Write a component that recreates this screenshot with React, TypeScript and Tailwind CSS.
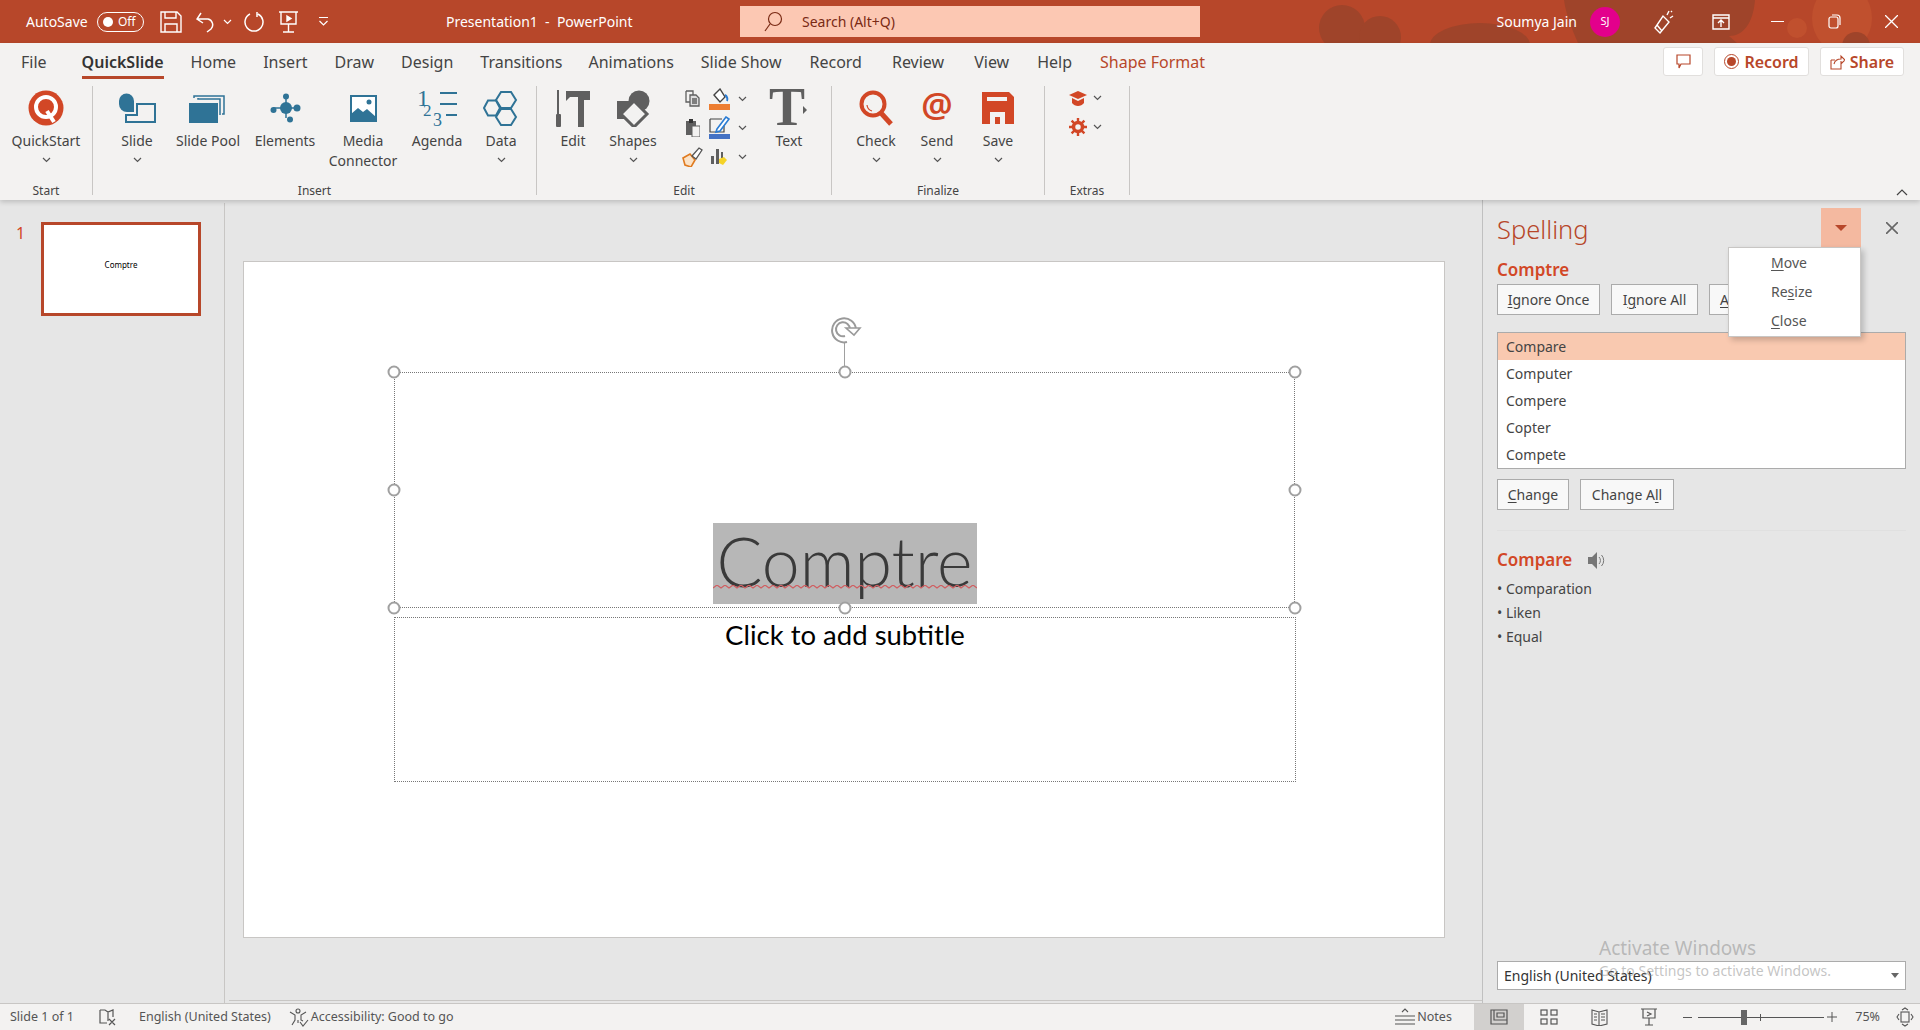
import React from "react";

const tabs = [
  { name: "File", cls: "" },
  { name: "QuickSlide", cls: "ml-[8px]" },
  { name: "Home", cls: "" },
  { name: "Insert", cls: "" },
  { name: "Draw", cls: "" },
  { name: "Design", cls: "" },
  { name: "Transitions", cls: "" },
  { name: "Animations", cls: "-ml-[1px]" },
  { name: "Slide Show", cls: "" },
  { name: "Record", cls: "ml-[1px]" },
  { name: "Review", cls: "ml-[3px]" },
  { name: "View", cls: "ml-[3px]" },
  { name: "Help", cls: "ml-[1px]" },
];

function Chev({ className = "text-[#555]" }: { className?: string }) {
  return (
    <svg width="9" height="6" viewBox="0 0 9 6" className={className}>
      <path d="M1 1l3.5 3.5L8 1" fill="none" stroke="currentColor" strokeWidth="1.2" />
    </svg>
  );
}

function RibbonButton({ label, width, chevron, children }: { label: React.ReactNode; width: string; chevron?: boolean; children: React.ReactNode }) {
  return (
    <div className={`flex flex-col items-center shrink-0 ${width}`}>
      <div className="h-[45px] flex items-center justify-center pb-[1px]">{children}</div>
      <div className="text-[14px] leading-[20px] text-[#444] text-center whitespace-nowrap">{label}</div>
      {chevron && (
        <div className="h-[16px] mt-[1px] flex items-center">
          <Chev />
        </div>
      )}
    </div>
  );
}

function Group({ label, width, pad, children }: { label: string; width: string; pad: string; children: React.ReactNode }) {
  return (
    <>
      <div className={`flex flex-col h-[114px] shrink-0 ${width}`}>
        <div className={`flex h-[92px] ${pad}`}>{children}</div>
        <div className="mt-auto text-center text-[12px] leading-[18px] text-[#444]">{label}</div>
      </div>
      <div className="w-px h-[109px] bg-[#c8c6c4] shrink-0" />
    </>
  );
}

const teal = "#2f7396";
const grey = "#5f5f5f";
const red = "#d24726";

function QuickIcon() {
  return (
    <svg width="36" height="36" viewBox="0 0 36 36">
      <circle cx="18" cy="18" r="17.5" fill={red} />
      <circle cx="18" cy="17" r="10" fill="none" stroke="#fff" strokeWidth="4" />
      <path d="M19 21l7 11" stroke="#fff" strokeWidth="4" />
    </svg>
  );
}

function SlideIcon() {
  return (
    <svg width="37" height="30" viewBox="0 0 37 30">
      <path d="M0 8a7.5 7.5 0 0 1 15 0v11H8a8 8 0 0 1-8-8z" fill={teal} />
      <path d="M18 11h18v18H7v-7h11z" fill="none" stroke={teal} strokeWidth="2" />
    </svg>
  );
}

function PoolIcon() {
  return (
    <svg width="38" height="29" viewBox="0 0 38 29">
      <path d="M5 4V2h30v18h-2M9 4V5h22v16" fill="none" stroke={teal} strokeWidth="1.5" />
      <rect x="0" y="9" width="29" height="20" fill={teal} />
    </svg>
  );
}

function ElementsIcon() {
  return (
    <svg width="31" height="30" viewBox="0 0 31 30" fill={teal}>
      <path d="M16 3v22M3 15h26" stroke={teal} strokeWidth="1.5" />
      <circle cx="16" cy="15" r="6" />
      <circle cx="16" cy="3.5" r="3" />
      <circle cx="3.5" cy="17" r="3" />
      <circle cx="27" cy="15" r="3.5" />
      <circle cx="20" cy="26.5" r="3" />
    </svg>
  );
}

function MediaIcon() {
  return (
    <svg width="27" height="27" viewBox="0 0 27 27">
      <rect x="1" y="1" width="25" height="25" fill="#fff" stroke={teal} strokeWidth="2" />
      <path d="M1 26V19l7-6 5 4 4-3 9 8v4z" fill={teal} />
      <circle cx="19" cy="7" r="2.5" fill={teal} />
    </svg>
  );
}

function AgendaIcon() {
  return (
    <svg width="40" height="38" viewBox="0 0 40 38" fill={teal} className="overflow-visible">
      <text x="0" y="17" fontFamily="Liberation Serif, serif" fontSize="24">1</text>
      <text x="6" y="27" fontFamily="Liberation Serif, serif" fontSize="17">2</text>
      <text x="16" y="37" fontFamily="Liberation Serif, serif" fontSize="18">3</text>
      <path d="M23 4h17M23 15h17M29 26h11" stroke={teal} strokeWidth="1.8" />
    </svg>
  );
}

function DataIcon() {
  return (
    <svg width="36" height="37" viewBox="0 0 36 37" fill="none" stroke={teal} strokeWidth="2">
      <path d="M18 2h10l5 8-5 8H18l-5-8z" />
      <path d="M5 10.5h8l4 7.5-4 7.5H5L1 18z" />
      <path d="M18 19h10l5 8-5 8H18l-5-8z" />
    </svg>
  );
}

function EditIcon() {
  return (
    <svg width="34" height="37" viewBox="0 0 34 37" fill={grey}>
      <rect x="1" y="0" width="2" height="24" />
      <rect x="0" y="24" width="5" height="13" rx="1" />
      <path d="M10 1h24v9h-6v27h-6V7H14l-4 4z" />
    </svg>
  );
}

function ShapesIcon() {
  return (
    <svg width="33" height="37" viewBox="0 0 33 37">
      <circle cx="22" cy="11" r="10.5" fill={grey} />
      <rect x="0" y="11" width="14" height="18" fill={grey} />
      <path d="M17 11l13 13-13 13L4 24z" fill="#f3f2f1" stroke={grey} strokeWidth="3" />
    </svg>
  );
}

function SmallTools() {
  return (
    <div className="grid grid-cols-[27px_26px_20px] auto-rows-[29px] items-center justify-items-center w-[80px] ml-[16px] -mt-[2px] h-[90px]">
      <svg width="15" height="17" viewBox="0 0 15 17" fill="none" stroke={grey} strokeWidth="1.3">
        <path d="M1 1h7v4M1 1v11h4" />
        <path d="M5 5h6l3 3v8H5z" fill="#ddd" />
        <path d="M7 9h5M7 11h5M7 13h5" />
      </svg>
      <svg width="21" height="22" viewBox="0 0 21 22">
        <path d="M5 7l6-6 5 8-5 5z" fill="#fff" stroke="#444" strokeWidth="1.4" />
        <path d="M16 7c2 1 3 4 2 6" stroke="#2b7cd3" strokeWidth="2" fill="none" />
        <rect x="0" y="16" width="21" height="6" fill="#ed7d31" />
      </svg>
      <Chev />
      <svg width="14" height="18" viewBox="0 0 14 18">
        <rect x="0" y="2" width="10" height="14" fill={grey} />
        <rect x="3" y="0" width="4" height="4" fill="#333" />
        <rect x="6" y="7" width="8" height="11" fill="#f3f2f1" stroke={grey} />
      </svg>
      <svg width="21" height="23" viewBox="0 0 21 23">
        <path d="M1 3h12M1 3v13h14v-6" fill="none" stroke="#444" strokeWidth="1.2" />
        <path d="M8 13l9-12 3 2-9 12-4 1z" fill="#fff" stroke="#2b7cd3" strokeWidth="1.6" />
        <rect x="0" y="18" width="21" height="5" fill="#4472c4" />
      </svg>
      <Chev />
      <svg width="21" height="20" viewBox="0 0 21 20">
        <path d="M1 11l7-4 5 6-4 7-6-2z" fill="#fbe3c8" stroke="#e07b1f" strokeWidth="1.6" />
        <path d="M10 9l7-8 3 2-6 9z" fill="#fff" stroke="#555" strokeWidth="1.3" />
      </svg>
      <svg width="16" height="17" viewBox="0 0 16 17">
        <rect x="0" y="8" width="3" height="8" fill={grey} />
        <rect x="5" y="1" width="3" height="15" fill={grey} />
        <rect x="10" y="4" width="2" height="6" fill={grey} />
        <path d="M8 11l5-2 3 3-4 5-4-2z" fill="#f5d327" />
      </svg>
      <Chev />
    </div>
  );
}

function TextIcon() {
  return (
    <svg width="38" height="40" viewBox="0 0 38 40" className="overflow-visible">
      <text x="-1" y="37" fontFamily="Liberation Serif, serif" fontWeight="700" fontSize="54" fill={grey}>T</text>
      <path d="M33 18l4 4-4 4z" fill={grey} />
    </svg>
  );
}

function CheckIcon() {
  return (
    <svg width="35" height="36" viewBox="0 0 35 36" fill="none" stroke={red}>
      <circle cx="14" cy="14" r="11.5" strokeWidth="4" />
      <path d="M22 23l10 11" strokeWidth="5" />
      <path d="M8 15a7 7 0 0 0 5 6" strokeWidth="1.2" />
    </svg>
  );
}

function SendIcon() {
  return (
    <svg width="34" height="38" viewBox="0 0 34 38" className="overflow-visible">
      <text x="17" y="29" textAnchor="middle" fontFamily="Noto Sans, sans-serif" fontSize="35" fontWeight="600" fill={red}>@</text>
    </svg>
  );
}

function SaveIcon() {
  return (
    <svg width="32" height="32" viewBox="0 0 32 32" fill={red}>
      <path d="M0 0h27l5 5v27H0z" />
      <rect x="5" y="5" width="20" height="4" fill="#f3f2f1" />
      <path d="M8 32V20h15v12h-5v-7h-5v7z" fill="#f3f2f1" />
    </svg>
  );
}

function TitleBlobs() {
  return (
    <svg width="640" height="43" viewBox="0 0 640 43" className="absolute right-0 top-0">
      <g fill="#c0502e">
        <circle cx="517" cy="28" r="10" />
        <ellipse cx="562" cy="18" rx="30" ry="34" />
      </g>
      <g fill="#9f442a">
        <circle cx="62" cy="28" r="23" />
        <circle cx="100" cy="37" r="21" />
        <ellipse cx="200" cy="45" rx="50" ry="22" />
        <path d="M284 0h191c-2 24-12 36-26 36l8 7H298c-6-14-12-28-14-43z" />
        <ellipse cx="576" cy="46" rx="14" ry="14" />
      </g>
    </svg>
  );
}

function Handle({ x, y }: { x: number; y: number }) {
  return <div className="absolute w-[13px] h-[13px] rounded-full bg-white border-2 border-[#a0a0a0] -translate-x-1/2 -translate-y-1/2" style={{ left: x, top: y }} />;
}

const squiggle = Array.from({ length: 67 }, (_, i) => `${i * 4},${i % 2 ? 0 : 3}`).join(" ");

function Slide() {
  const xs = [0, 451, 901];
  return (
    <div className="relative w-[1202px] h-[677px] bg-white border border-[#c8c6c4] shrink-0">
      <div className="absolute left-[150px] top-[110px] w-[901px] h-[236px] border border-dotted border-[#777] flex items-end justify-center pb-[3px]">
        <span className="relative w-[264px] h-[81px] bg-[#b7b7b7] text-[#3a3a3a] text-center font-['Lato',sans-serif] font-light text-[68px] leading-[76px]">
          Comptre
          <svg width="264" height="4" className="absolute left-0 top-[62px]">
            <polyline points={squiggle} fill="none" stroke="#cf5f62" strokeWidth="1.2" />
          </svg>
        </span>
      </div>
      <div className="absolute left-[150px] top-[355px] w-[902px] h-[165px] border border-dotted border-[#777] flex justify-center">
        <span className="font-['Lato',sans-serif] text-[27.5px] leading-[34px] text-black">Click to add subtitle</span>
      </div>
      <div className="absolute left-[600px] top-[80px] w-px h-[30px] bg-[#a0a0a0]" />
      <svg width="34" height="28" viewBox="0 0 34 28" className="absolute left-[584px] top-[55px]" fill="none" stroke="#9a9a9a">
        <path d="M28 12a12 12 0 1 0-9 13" strokeWidth="2" />
        <path d="M22 12a7 7 0 1 0-5 7" strokeWidth="2" />
        <path d="M18 11h14l-6 7z" fill="#fff" strokeWidth="1.6" />
      </svg>
      {xs.map((x) => (
        <React.Fragment key={x}>
          <Handle x={150 + x} y={110} />
          {x !== 451 && <Handle x={150 + x} y={228} />}
          <Handle x={150 + x} y={346} />
        </React.Fragment>
      ))}
    </div>
  );
}

function PaneButton({ children, width }: { children: React.ReactNode; width: string }) {
  return <div className={`h-[31px] ${width} shrink-0 bg-white/70 border border-[#ababab] flex items-center justify-center text-[14px] text-[#444]`}>{children}</div>;
}

function U({ children }: { children: React.ReactNode }) {
  return <span className="underline underline-offset-2 decoration-1">{children}</span>;
}

export default function App() {
  return (
    <div className="relative w-[1920px] h-[1030px] overflow-hidden flex flex-col bg-[#e6e6e6] font-['Noto_Sans',sans-serif]">
      {/* title bar */}
      <div className="relative h-[43px] shrink-0 bg-[#b7472a] flex items-center text-white text-[14px]">
        <TitleBlobs />
        <span className="relative ml-[26px] w-[71px]">AutoSave</span>
        <div className="relative w-[47px] h-[20px] rounded-full border border-white flex items-center pl-[5px] gap-[5px] text-[12px]">
          <span className="w-[10px] h-[10px] rounded-full bg-white" />
          Off
        </div>
        <svg width="22" height="22" viewBox="0 0 22 22" className="relative ml-[16px]" fill="none" stroke="#fff" strokeWidth="1.4">
          <path d="M1 1h16l4 4v16H1zM5 1v6h11V1M5 21v-8h12v8" />
        </svg>
        <svg width="20" height="22" viewBox="0 0 20 22" className="relative ml-[14px]" fill="none" stroke="#fff" strokeWidth="1.5">
          <path d="M1 8h11a6 6 0 0 1 3 10l-4 3M5 2L1 8l6 4" />
        </svg>
        <Chev className="relative ml-[7px] text-white" />
        <svg width="21" height="22" viewBox="0 0 21 22" className="relative ml-[12px]" fill="none" stroke="#fff" strokeWidth="1.5">
          <path d="M6 3a9 9 0 1 0 8 0M13 1v5" />
        </svg>
        <svg width="19" height="22" viewBox="0 0 19 22" className="relative ml-[14px]" fill="none" stroke="#fff" strokeWidth="1.4">
          <path d="M0 1h19M2 1v12h15V1M9.5 13v8M4 21h11" />
          <path d="M8 5l4 2.5L8 10z" fill="#fff" />
        </svg>
        <svg width="11" height="11" viewBox="0 0 11 11" className="relative ml-[20px]" fill="none" stroke="#fff" strokeWidth="1.2">
          <path d="M1 1.5h9M1.5 5l4 4 4-4" />
        </svg>
        <span className="relative ml-[117px] w-[294px] whitespace-pre">Presentation1  -  PowerPoint</span>
        <div className="relative w-[460px] h-[31px] bg-[#fcc8b3] flex items-center text-[#7a2a14]">
          <svg width="19" height="21" viewBox="0 0 19 21" className="ml-[24px]" fill="none" stroke="#7a2a14" strokeWidth="1.2">
            <circle cx="11" cy="8" r="6.5" />
            <path d="M6 13l-5 7" />
          </svg>
          <span className="ml-[19px]">Search (Alt+Q)</span>
        </div>
        <span className="relative ml-auto">Soumya Jain</span>
        <div className="relative ml-[13px] w-[30px] h-[30px] rounded-full bg-[#e3008c] flex items-center justify-center text-[11px]">SJ</div>
        <svg width="20" height="24" viewBox="0 0 20 24" className="relative ml-[34px]" fill="none" stroke="#fff" strokeWidth="1.4">
          <path d="M1 18L9 6l6 6-9 11zM3 15l5 6M13 5l2-4M16 8l3-2M17 2l1-1" />
        </svg>
        <svg width="18" height="16" viewBox="0 0 18 16" className="relative ml-[38px]" fill="none" stroke="#fff" strokeWidth="1.4">
          <path d="M1 1h16v14H1zM1 4h16M9 13V7M6 9l3-3 3 3" />
        </svg>
        <span className="relative ml-[41px] w-[13px] h-[1.5px] bg-white" />
        <svg width="13" height="15" viewBox="0 0 13 15" className="relative ml-[44px]" fill="none" stroke="#fff" strokeWidth="1.2">
          <rect x="1" y="3" width="9" height="11" rx="2" />
          <path d="M4 1h5a3 3 0 0 1 3 3v7" />
        </svg>
        <svg width="13" height="13" viewBox="0 0 13 13" className="relative ml-[44px] mr-[22px]" stroke="#fff" strokeWidth="1.3">
          <path d="M0 0l13 13M13 0L0 13" />
        </svg>
      </div>

      {/* tabs */}
      <div className="relative z-10 bg-[#f3f2f1] shadow-[0_2px_5px_rgba(0,0,0,0.18)] shrink-0">
        <div className="h-[37px] flex items-center pl-[21px] gap-[27px] text-[16px] text-[#444]">
          {tabs.map((t) =>
            t.name === "QuickSlide" ? (
              <div key={t.name} className={`relative font-semibold text-[#333] ${t.cls}`}>
                {t.name}
                <div className="absolute -bottom-[5px] left-0 right-0 h-[3px] bg-[#b7472a]" />
              </div>
            ) : (
              <span key={t.name} className={t.cls}>{t.name}</span>
            )
          )}
          <span className="ml-[1px] text-[#b7472a]">Shape Format</span>
          <div className="ml-auto mr-[16px] flex gap-[11px] text-[#b7472a] font-semibold">
            <div className="w-[40px] h-[29px] bg-white border border-[#e1dfdd] rounded-[3px] flex items-center justify-center">
              <svg width="15" height="15" viewBox="0 0 15 15" fill="none" stroke="#b7472a" strokeWidth="1.2">
                <path d="M1 1h13v9H5l-2 4v-4H1z" />
              </svg>
            </div>
            <div className="w-[95px] h-[29px] bg-white border border-[#e1dfdd] rounded-[3px] flex items-center justify-center gap-[5px]">
              <span className="w-[15px] h-[15px] rounded-full border border-[#b7472a] flex items-center justify-center">
                <span className="w-[9px] h-[9px] rounded-full bg-[#b7472a]" />
              </span>
              Record
            </div>
            <div className="w-[84px] h-[29px] bg-white border border-[#e1dfdd] rounded-[3px] flex items-center justify-center gap-[5px]">
              <svg width="15" height="16" viewBox="0 0 15 16" fill="none" stroke="#b7472a" strokeWidth="1.1">
                <path d="M1 6h4M1 6v9h10v-5M4 10c1-4 4-5 7-5V2l4 4-4 4V7" />
              </svg>
              Share
            </div>
          </div>
        </div>

        {/* ribbon */}
        <div className="relative h-[120px] flex pt-[6px]">
          <Group label="Start" width="w-[92px]" pad="pl-0">
            <RibbonButton label="QuickStart" width="w-[92px]" chevron>
              <QuickIcon />
            </RibbonButton>
          </Group>
          <Group label="Insert" width="w-[443px]" pad="pl-[12px]">
            <RibbonButton label="Slide" width="w-[64px]" chevron>
              <SlideIcon />
            </RibbonButton>
            <RibbonButton label="Slide Pool" width="w-[78px]">
              <PoolIcon />
            </RibbonButton>
            <RibbonButton label="Elements" width="w-[76px]">
              <ElementsIcon />
            </RibbonButton>
            <RibbonButton label={<>Media<br />Connector</>} width="w-[80px]">
              <MediaIcon />
            </RibbonButton>
            <RibbonButton label="Agenda" width="w-[68px]">
              <AgendaIcon />
            </RibbonButton>
            <RibbonButton label="Data" width="w-[60px]" chevron>
              <DataIcon />
            </RibbonButton>
          </Group>
          <Group label="Edit" width="w-[294px]" pad="pl-[6px]">
            <RibbonButton label="Edit" width="w-[60px]">
              <EditIcon />
            </RibbonButton>
            <RibbonButton label="Shapes" width="w-[60px]" chevron>
              <ShapesIcon />
            </RibbonButton>
            <SmallTools />
            <RibbonButton label="Text" width="w-[60px]">
              <TextIcon />
            </RibbonButton>
          </Group>
          <Group label="Finalize" width="w-[212px]" pad="pl-[14px] gap-[1px]">
            <RibbonButton label="Check" width="w-[60px]" chevron>
              <CheckIcon />
            </RibbonButton>
            <RibbonButton label="Send" width="w-[60px]" chevron>
              <SendIcon />
            </RibbonButton>
            <RibbonButton label="Save" width="w-[60px]" chevron>
              <SaveIcon />
            </RibbonButton>
          </Group>
          <Group label="Extras" width="w-[84px]" pad="pl-[24px]">
            <div className="grid grid-cols-[18px_20px] auto-rows-[29px] items-center justify-items-center -mt-[3px] h-[80px]">
              <svg width="18" height="16" viewBox="0 0 18 16" fill={red}>
                <path d="M9 1l9 4-9 4-9-4z" />
                <path d="M3 8l6 3 6-3v5c-3 4-9 4-12 0z" />
              </svg>
              <Chev />
              <svg width="18" height="18" viewBox="0 0 18 18" fill="none" stroke={red}>
                <circle cx="9" cy="9" r="4.5" strokeWidth="3.5" />
                <path d="M9 0v4M9 14v4M0 9h4M14 9h4M2.6 2.6l3 3M12.4 12.4l3 3M15.4 2.6l-3 3M5.6 12.4l-3 3" strokeWidth="2.4" />
              </svg>
              <Chev />
            </div>
          </Group>
          <svg width="12" height="7" viewBox="0 0 12 7" className="absolute right-[12px] top-[109px]" fill="none" stroke="#444" strokeWidth="1.2">
            <path d="M1 6l5-5 5 5" />
          </svg>
        </div>
      </div>

      {/* body */}
      <div className="flex-1 min-h-0 flex">
        <div className="w-[225px] shrink-0 mt-[3px] border-r border-[#c8c6c4] pt-[19px] pl-[16px] flex items-start">
          <span className="w-[25px] text-[16px] leading-[22px] text-[#d24726]">1</span>
          <div className="w-[160px] h-[94px] bg-white border-[3px] border-[#b7472a] flex items-center justify-center text-[8px] text-black pb-[8px]">Comptre</div>
        </div>
        <div className="flex-1 min-w-0 flex flex-col pt-[61px] pl-[18px]">
          <Slide />
          <div className="mt-auto mb-[2px] -ml-[14px] h-px bg-[#c8c6c4]" />
        </div>
        <div className="relative w-[438px] shrink-0 border-l border-[#c0c0c0] flex flex-col pl-[14px] pr-[14px] pt-[8px] pb-[13px]">
          <div className="h-[40px] flex items-center">
            <span className="text-[25.5px] leading-[34px] font-light text-[#b7472a] mt-[1px]">Spelling</span>
            <div className="ml-auto w-[40px] h-[40px] bg-[#f4b9a0] flex items-center justify-center">
              <span className="w-0 h-0 border-x-[6px] border-x-transparent border-t-[6px] border-t-[#b7472a]" />
            </div>
            <svg width="12" height="12" viewBox="0 0 12 12" className="ml-[25px] mr-[8px]" stroke="#666" strokeWidth="1.6">
              <path d="M0 0l12 12M12 0L0 12" />
            </svg>
          </div>
          <div className="mt-[10px] h-[24px] text-[17px] leading-[24px] font-semibold text-[#d24726]">Comptre</div>
          <div className="mt-[2px] flex gap-[11px]">
            <PaneButton width="w-[103px]"><span><U>I</U>gnore Once</span></PaneButton>
            <PaneButton width="w-[87px]"><span>I<U>g</U>nore All</span></PaneButton>
            <PaneButton width="w-[87px] !justify-start pl-[10px]"><U>A</U>dd</PaneButton>
          </div>
          <div className="mt-[17px] h-[137px] bg-white border border-[#ababab] text-[14px] text-[#444]">
            <div className="h-[27px] leading-[27px] px-[8px] bg-[#f9c9b0]">Compare</div>
            <div className="h-[27px] leading-[27px] px-[8px]">Computer</div>
            <div className="h-[27px] leading-[27px] px-[8px]">Compere</div>
            <div className="h-[27px] leading-[27px] px-[8px]">Copter</div>
            <div className="h-[27px] leading-[27px] px-[8px]">Compete</div>
          </div>
          <div className="mt-[10px] flex gap-[11px]">
            <PaneButton width="w-[72px]"><span><U>C</U>hange</span></PaneButton>
            <PaneButton width="w-[94px]"><span>Change A<U>l</U>l</span></PaneButton>
          </div>
          <div className="mt-[20px] h-px bg-[#e0e0e0]" />
          <div className="mt-[17px] h-[24px] flex items-center gap-[16px] text-[17px] font-semibold text-[#d24726]">
            Compare
            <svg width="18" height="17" viewBox="0 0 18 17" fill="none" stroke="#777">
              <path d="M0 5h4l5-5v17l-5-5H0z" fill="#777" stroke="none" />
              <path d="M11 5a5 5 0 0 1 0 7M13.5 3a8 8 0 0 1 0 11" strokeWidth="1" />
            </svg>
          </div>
          <div className="mt-[5px] text-[14px] leading-[24px] text-[#444]">
            <div>• Comparation</div>
            <div>• Liken</div>
            <div>• Equal</div>
          </div>
          <div className="mt-auto h-[29px] bg-white border border-[#ababab] flex items-center pl-[6px] pr-[6px] text-[14px] text-[#333]">
            English (United States)
            <span className="ml-auto w-0 h-0 border-x-[4.5px] border-x-transparent border-t-[5px] border-t-[#666]" />
          </div>
          <div className="absolute left-[245px] top-[47px] w-[133px] h-[90px] bg-white border border-[#c8c6c4] shadow-[3px_3px_6px_rgba(0,0,0,0.2)] pl-[42px] text-[14px] leading-[29px] text-[#555]">
            <div><U>M</U>ove</div>
            <div>Re<U>s</U>ize</div>
            <div><U>C</U>lose</div>
          </div>
          <div className="absolute left-[116px] top-[735px] pointer-events-none text-[#8a8a8a]/50 whitespace-nowrap">
            <div className="text-[19px] leading-[26px]">Activate Windows</div>
            <div className="text-[14px] leading-[20px]">Go to Settings to activate Windows.</div>
          </div>
        </div>
      </div>

      {/* status bar */}
      <div className="h-[27px] shrink-0 bg-[#f3f2f1] border-t border-[#c8c6c4] flex items-center text-[12.5px] text-[#555]">
        <span className="ml-[10px]">Slide 1 of 1</span>
        <svg width="18" height="18" viewBox="0 0 18 18" className="ml-[25px]" fill="none" stroke="#555" strokeWidth="1.2">
          <path d="M1 2h5l3 2 5-2v7M1 2v13h7M9 4v9M10 11l6 6M16 11l-6 6" />
        </svg>
        <span className="ml-[22px]">English (United States)</span>
        <svg width="21" height="19" viewBox="0 0 21 19" className="ml-[18px]" fill="none" stroke="#555" strokeWidth="1.1">
          <circle cx="9" cy="3" r="2" />
          <path d="M1 4l5 3v5l-3 5M17 4l-5 3v5l2 1M9 12v3M11 14l3 4 5-6" />
        </svg>
        <span className="ml-[1px]">Accessibility: Good to go</span>
        <svg width="20" height="18" viewBox="0 0 20 18" className="ml-auto" fill="none" stroke="#555" strokeWidth="1.1">
          <path d="M0 8h20M0 12h20M0 16h20M7 4l3-3 3 3" />
        </svg>
        <span className="ml-[2px] w-[57px]">Notes</span>
        <div className="w-[50px] h-[26px] bg-[#d2d0ce] flex items-center justify-center">
          <svg width="18" height="16" viewBox="0 0 18 16" fill="none" stroke="#555" strokeWidth="1.2">
            <path d="M1 1h16v14H1zM4 1v10h13M7 4h7v4H7z" />
          </svg>
        </div>
        <svg width="18" height="16" viewBox="0 0 18 16" className="ml-[16px]" fill="none" stroke="#555" strokeWidth="1.2">
          <rect x="1" y="1" width="6" height="5" />
          <rect x="11" y="1" width="6" height="5" />
          <rect x="1" y="10" width="6" height="5" />
          <rect x="11" y="10" width="6" height="5" />
        </svg>
        <svg width="17" height="17" viewBox="0 0 17 17" className="ml-[33px]" fill="none" stroke="#555" strokeWidth="1.1">
          <path d="M1 1l7 2 8-2v14l-8 2-7-2zM8 3v14M3 5h3M3 8h3M3 11h3M10 5h4M10 8h4M10 11h4" />
        </svg>
        <svg width="16" height="18" viewBox="0 0 16 18" className="ml-[33px]" fill="none" stroke="#555" strokeWidth="1.2">
          <path d="M0 1h16M2 1v9h12V1M8 10v7M4 17h8M6 4l4 2-4 2" />
        </svg>
        <span className="ml-[26px] w-[9px] h-px bg-[#555]" />
        <div className="relative ml-[6px] w-[126px] h-px bg-[#555]">
          <span className="absolute left-[43px] -top-[7px] w-[6px] h-[15px] bg-[#666]" />
          <span className="absolute left-[62px] -top-[3px] w-px h-[7px] bg-[#555]" />
        </div>
        <svg width="10" height="10" viewBox="0 0 10 10" className="ml-[3px]" stroke="#555" strokeWidth="1">
          <path d="M0 5h10M5 0v10" />
        </svg>
        <span className="ml-[18px]">75%</span>
        <svg width="18" height="20" viewBox="0 0 18 20" className="ml-[16px] mr-[6px]" fill="none" stroke="#555" strokeWidth="1.1">
          <rect x="5" y="5" width="8" height="10" />
          <path d="M6 3l3-2 3 2M6 17l3 2 3-2M3 7l-2 3 2 3M15 7l2 3-2 3" />
        </svg>
      </div>
    </div>
  );
}
